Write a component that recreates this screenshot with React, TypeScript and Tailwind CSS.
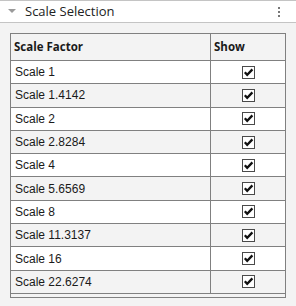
const scales = ['1', '1.4142', '2', '2.8284', '4', '5.6569', '8', '11.3137', '16', '22.6274']

function CheckBox() {
  return (
    <span className="flex h-[13px] w-[13px] items-center justify-center border border-[#4a4a4a] bg-white">
      <svg width="11" height="11" viewBox="0 0 11 11">
        <polyline points="1.8,5.2 4.2,7.8 9.4,2.4" fill="none" stroke="#111" strokeWidth="2.3" />
      </svg>
    </span>
  )
}

export default function App() {
  return (
    <div className="h-[306px] w-[296px] overflow-hidden bg-[#f3f3f3] font-['Liberation_Sans',Arial,sans-serif] text-[#1a1a1a]">
      {/* Panel header */}
      <div className="flex h-[23px] items-center border-t border-b border-[#c4c4c4] bg-white">
        <svg width="8" height="5" viewBox="0 0 8 5" className="ml-[8px] mr-[9px]">
          <polygon points="0,0 8,0 4,4" fill="#9a9a9a" />
        </svg>
        <span className="font-['Open_Sans',sans-serif] text-[13px] text-[#222]">Scale Selection</span>
        <div className="ml-auto mr-[16px] flex flex-col gap-[2px]">
          <span className="h-[2px] w-[2px] bg-[#777]" />
          <span className="h-[2px] w-[2px] bg-[#777]" />
          <span className="h-[2px] w-[2px] bg-[#777]" />
        </div>
      </div>

      {/* Table */}
      <div className="px-[10px] pt-[10px]">
        <div className="border border-[#808080] pb-[3px]">
          <div className="flex h-[27px] border-b border-[#808080] bg-[#f3f3f3] font-['Open_Sans',sans-serif] text-[11.5px] font-bold">
            <div className="flex w-[200px] items-center border-r border-[#808080] pl-[3px]">Scale Factor</div>
            <div className="flex flex-1 items-center pl-[3px]">Show</div>
          </div>
          {scales.map((s, i) => (
            <div
              key={s}
              className={`flex h-[23.3px] border-b border-[#808080] text-[12px] ${i % 2 === 0 ? 'bg-white' : 'bg-[#f3f3f3]'}`}
            >
              <div className="flex w-[200px] items-center border-r border-[#808080] pl-[4px]">Scale {s}</div>
              <div className="flex flex-1 items-center justify-center">
                <CheckBox />
              </div>
            </div>
          ))}
        </div>
      </div>
    </div>
  )
}
